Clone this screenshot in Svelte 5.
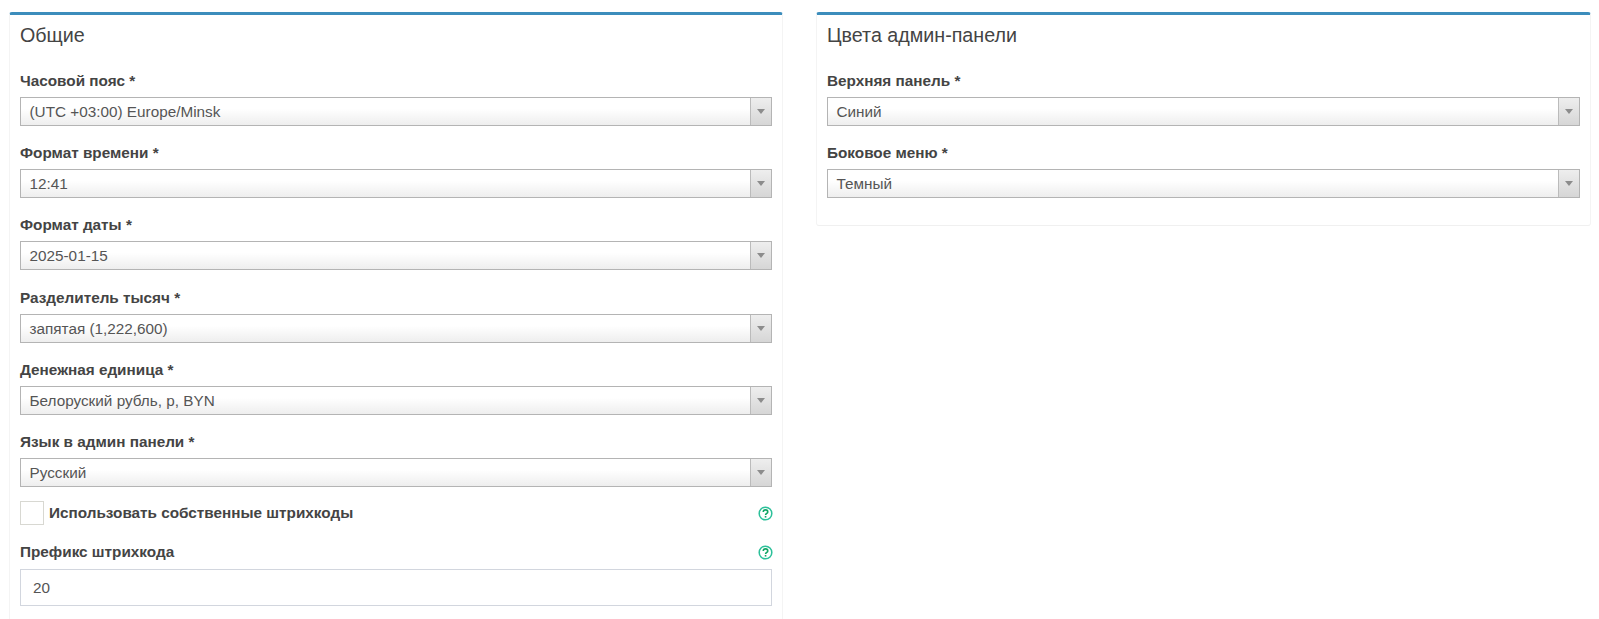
<script>
  const general = [
    { label: "Часовой пояс *", value: "(UTC +03:00) Europe/Minsk" },
    { label: "Формат времени *", value: "12:41" },
    { label: "Формат даты *", value: "2025-01-15" },
    { label: "Разделитель тысяч *", value: "запятая (1,222,600)" },
    { label: "Денежная единица *", value: "Белоруский рубль, р, BYN" },
    { label: "Язык в админ панели *", value: "Русский" },
  ];
  const colors = [
    { label: "Верхняя панель *", value: "Синий" },
    { label: "Боковое меню *", value: "Темный" },
  ];
</script>

{#snippet select(item)}
  <div class="form-group">
    <div class="label">{item.label}</div>
    <div class="select">
      <span class="select-value">{item.value}</span>
      <span class="select-arrow"><i></i></span>
    </div>
  </div>
{/snippet}

{#snippet help()}
  <svg class="help" viewBox="0 0 14 14" width="15" height="15" aria-hidden="true">
    <circle cx="7" cy="7" r="5.9" fill="none" stroke="#2cc09a" stroke-width="1.4" />
    <path d="M4.9 5.6c0-1.3 1-2 2.1-2s2.1.7 2.1 1.9c0 1.5-2 1.4-2 3" fill="none" stroke="#12a564" stroke-width="1.5" />
    <rect x="6.3" y="9.3" width="1.5" height="1.5" fill="#12a564" />
  </svg>
{/snippet}

<div class="page">
  <section class="card left">
    <h3>Общие</h3>
    {#each general as item}
      {@render select(item)}
    {/each}
    <div class="check-row">
      <span class="checkbox"></span>
      <span class="label check-label">Использовать собственные штрихкоды</span>
      {@render help()}
    </div>
    <div class="prefix-head">
      <span class="label">Префикс штрихкода</span>
      {@render help()}
    </div>
    <div class="text-input">20</div>
  </section>

  <section class="card right">
    <h3>Цвета админ-панели</h3>
    {#each colors as item}
      {@render select(item)}
    {/each}
  </section>
</div>

<style>
  :global(body) {
    background: #fff;
    overflow: hidden;
  }

  .page {
    display: grid;
    grid-template-columns: 774px 775px;
    gap: 33px;
    align-items: start;
    padding: 12px 0 0 9px;
    height: 607px;
    overflow: hidden;
    font-family: "Liberation Sans", Arial, sans-serif;
    font-size: 15.3px;
    color: #555;
  }

  .card {
    border-top: 3px solid #3c8dbc;
    border-right: 1px solid #f4f4f4;
    border-left: 1px solid #f4f4f4;
    border-bottom: 1px solid #f0f0f0;
    border-radius: 3px;
    padding: 0 10px 20px;
  }

  .card.left {
    height: 700px;
  }

  h3 {
    margin: 0;
    padding-top: 8px;
    height: 46px;
    box-sizing: border-box;
    font-size: 19.7px;
    line-height: 24px;
    font-weight: 400;
    color: #444;
  }

  .form-group {
    height: 72.2px;
    padding-top: 10px;
    box-sizing: border-box;
  }

  .label {
    font-weight: 700;
    color: #444;
    line-height: 20px;
  }

  .select {
    display: flex;
    height: 29px;
    margin-top: 6px;
    box-sizing: border-box;
    border: 1px solid #b4b4b4;
    background: linear-gradient(#fff 40%, #eee);
  }

  .select-value {
    flex: 1;
    padding-left: 8.5px;
    line-height: 27px;
  }

  .select-arrow {
    display: flex;
    align-items: center;
    justify-content: center;
    width: 20px;
    border-left: 1px solid #bbb;
    background: linear-gradient(#eee, #d6d6d6);
  }

  .select-arrow i {
    border-top: 5px solid #8c8c8c;
    border-left: 4px solid transparent;
    border-right: 4px solid transparent;
  }

  .check-row {
    display: flex;
    align-items: center;
    gap: 5px;
    height: 24px;
    margin-top: 7px;
  }

  .checkbox {
    width: 24px;
    height: 24px;
    box-sizing: border-box;
    border: 1px solid #d8d8d2;
  }

  .check-label {
    flex: 1;
  }

  .help {
    flex: none;
    margin-right: -1px;
  }

  .prefix-head {
    display: flex;
    align-items: center;
    justify-content: space-between;
    margin-top: 17px;
  }

  .text-input {
    height: 37px;
    margin-top: 7px;
    box-sizing: border-box;
    border: 1px solid #d2d6de;
    padding-left: 12px;
    line-height: 35px;
  }
</style>
